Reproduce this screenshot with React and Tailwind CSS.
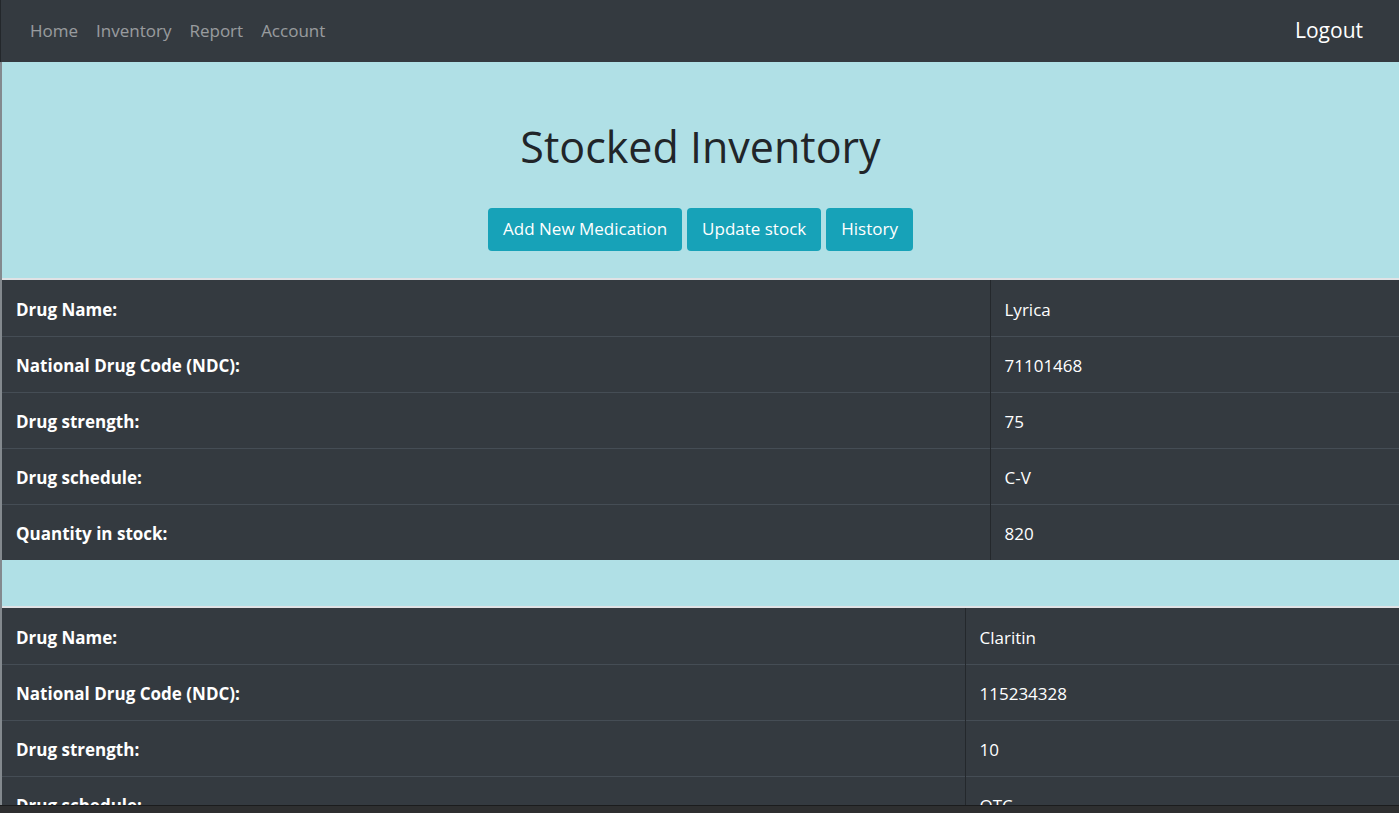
import React from "react";

const drugs = [
  {
    name: "Lyrica",
    ndc: "71101468",
    strength: "75",
    schedule: "C-V",
    qty: "820",
    split: "w-[988px]",
  },
  {
    name: "Claritin",
    ndc: "115234328",
    strength: "10",
    schedule: "OTC",
    qty: "1500",
    split: "w-[963px]",
  },
];

function DrugTable({ drug }) {
  const rows = [
    ["Drug Name:", drug.name],
    ["National Drug Code (NDC):", drug.ndc],
    ["Drug strength:", drug.strength],
    ["Drug schedule:", drug.schedule],
    ["Quantity in stock:", drug.qty],
  ];
  return (
    <div className="border-t-2 border-[#dfe2e5] bg-[#343a40]">
      <table className="w-full border-collapse text-white">
        <tbody>
          {rows.map(([label, value], i) => (
            <tr key={label} className={i > 0 ? "border-t border-[#454d55]" : ""}>
              <td className={`${drug.split} h-[56px] px-[14px] pt-[3px] pb-0 font-bold border-r border-[#24282c] align-middle`}>
                {label}
              </td>
              <td className="h-[56px] px-[14px] pt-[3px] pb-0 align-middle">{value}</td>
            </tr>
          ))}
        </tbody>
      </table>
    </div>
  );
}

export default function App() {
  return (
    <div
      className="min-h-screen bg-[#b0e0e6] text-[17px] leading-[1.5]"
      style={{ fontFamily: '"Open Sans", "Noto Sans", sans-serif' }}
    >
      {/* navbar */}
      <nav className="h-[62px] bg-[#343a40] flex items-center justify-between pl-[29px] pr-[36px] border-l border-[#23272b]">
        <ul className="flex items-center gap-[18px] text-white/50">
          <li>Home</li>
          <li>Inventory</li>
          <li>Report</li>
          <li>Account</li>
        </ul>
        <span className="text-[21px] text-white">Logout</span>
      </nav>

      <div className="border-l-2 border-[#83898e]">
        {/* header */}
        <div className="h-[216px] flex flex-col items-center pt-[59px]">
          <h1 className="text-[43px] leading-[1.2] text-[#212529] font-normal">Stocked Inventory</h1>
          <div className="flex gap-[5px] mt-[35px]">
            <button className="h-[43px] px-[15px] rounded-[4px] bg-[#17a2b8] text-white">
              Add New Medication
            </button>
            <button className="h-[43px] px-[15px] rounded-[4px] bg-[#17a2b8] text-white">
              Update stock
            </button>
            <button className="h-[43px] px-[15px] rounded-[4px] bg-[#17a2b8] text-white">
              History
            </button>
          </div>
        </div>

        <DrugTable drug={drugs[0]} />
        <div className="h-[46px]" />
        <DrugTable drug={drugs[1]} />
      </div>

      {/* bottom window strip */}
      <div className="fixed bottom-0 left-0 right-0 h-[8px] bg-[#2e2f30] border-t border-[#1b1c1d]" />
    </div>
  );
}
